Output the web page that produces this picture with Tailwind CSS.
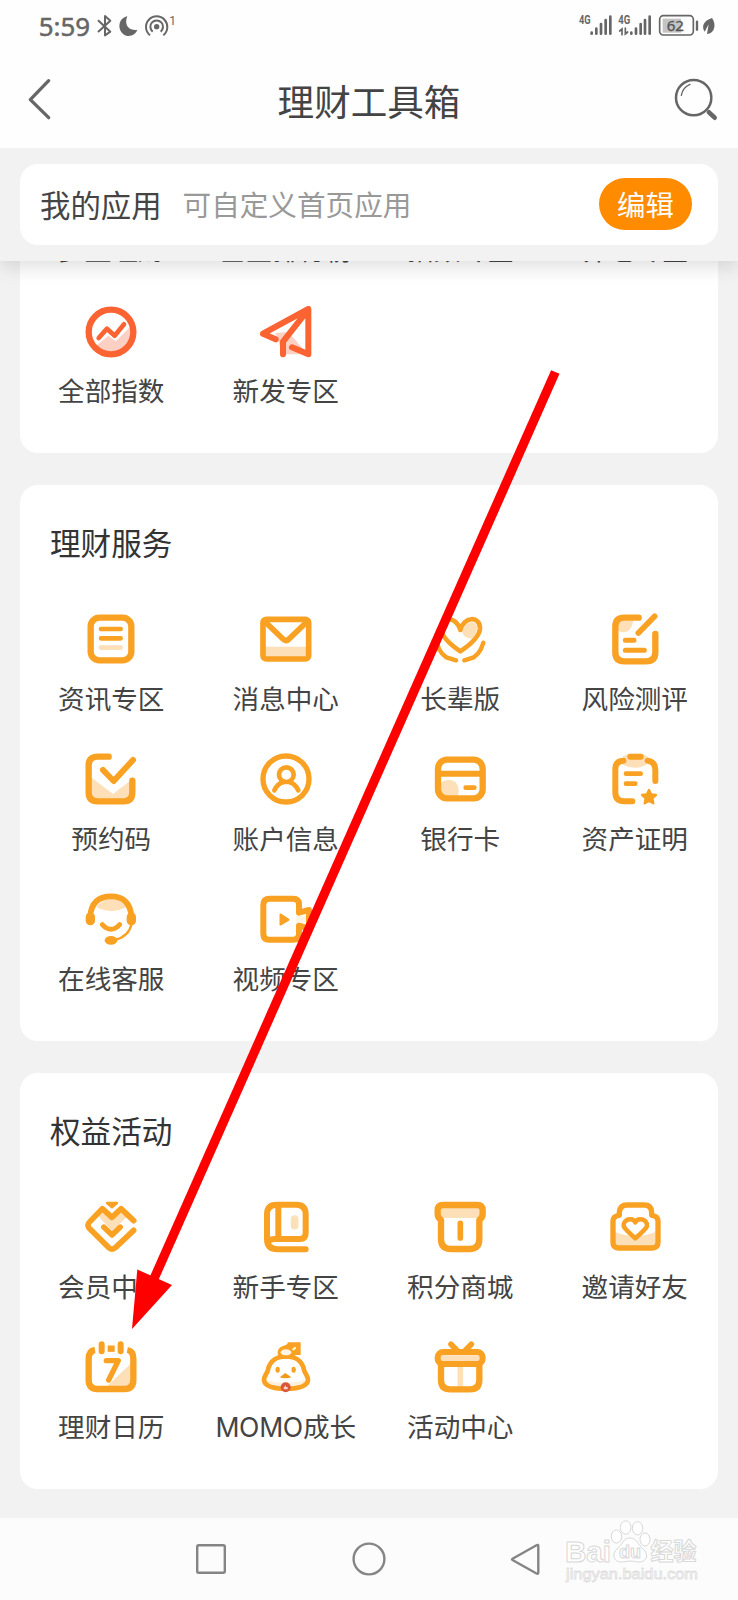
<!DOCTYPE html>
<html lang="zh-CN">
<head>
<meta charset="utf-8">
<title>理财工具箱</title>
<script src="https://cdn.jsdelivr.net/npm/@tailwindcss/browser@4"></script>
</head>
<body class="relative w-[738px] h-[1600px] overflow-hidden bg-[#f2f2f2] font-['Inter','Noto_Sans_CJK_SC',sans-serif] text-[#444]">
<div class="flex h-[1600px] flex-col">

<div class="relative z-10 h-[261px] shrink-0 bg-[#f2f2f2] shadow-[0_4px_20px_rgba(0,0,0,0.15)]">
  <div class="h-[148px] bg-[#fefefe]">
    <div class="flex h-[52px] items-center justify-between">
      <svg class="h-[52px] w-[190px]" viewBox="0 0 570 156" fill="none" stroke="#666" stroke-width="6">
        <text x="116" y="109" font-family="Noto Sans" font-size="77" fill="#666" stroke="#666" stroke-width="1.5" textLength="154" lengthAdjust="spacingAndGlyphs">5:59</text>
        <path d="M294 61L331 95L315 106V48L331 62L294 96" stroke-linejoin="round"/>
        <path d="M382 49C352 54 350 98 379 107C394 110 408 102 412 89C384 94 372 72 382 49Z" fill="#666" stroke="none"/>
        <circle cx="470" cy="80" r="8" fill="#666" stroke="none"/>
        <path d="M458 95A19 19 0 1 1 482 95M450 106A32 32 0 1 1 490 106" stroke-width="6"/>
        <text x="508" y="74" font-family="Roboto" font-size="36" fill="#666" stroke="none">1</text>
      </svg>
      <svg class="mr-[12px] h-[52px] w-[150px]" viewBox="624 0 450 156" fill="#666">
        <text x="633" y="73" font-family="Roboto" font-weight="700" font-size="36" textLength="35" lengthAdjust="spacingAndGlyphs">4G</text>
        <text x="751" y="73" font-family="Roboto" font-weight="700" font-size="36" textLength="36" lengthAdjust="spacingAndGlyphs">4G</text>
        <g stroke="#666" stroke-width="8" stroke-linecap="round">
          <path d="M671 98V101M685 86V101M699 72V101M713 60V101M727 50V101M790 98V101M804 86V101M818 72V101M831 60V101M845 50V101"/>
          <path d="M762 104V87L755 93M772 84V102L779 96" fill="none" stroke-width="5"/>
        </g>
        <rect x="884" y="56" width="55" height="42" fill="#c4c4c4"/>
        <rect x="875" y="47" width="101" height="58" rx="11" fill="none" stroke="#666" stroke-width="5"/>
        <path d="M987 65V89" stroke="#666" stroke-width="7" stroke-linecap="round"/>
        <text x="896" y="94" font-family="Noto Sans" font-size="45" textLength="52" lengthAdjust="spacingAndGlyphs" fill="#555" stroke="#555">62</text>
        <path d="M1032 54C1006 62 1000 80 1010 95L1022 73L1017 102C1040 101 1046 73 1032 54Z"/>
      </svg>
    </div>
    <div class="flex h-24 items-center justify-between">
      <svg class="h-24 w-20" viewBox="0 156 240 288" fill="none" stroke="#666" stroke-width="10" stroke-linecap="round" stroke-linejoin="round"><path d="M146 242L91 299L146 353"/></svg>
      <h1 class="pt-[5px] text-[36.6px] leading-[40px]">理财工具箱</h1>
      <svg class="h-24 w-20" viewBox="870 156 240 288" fill="none" stroke="#666" stroke-linecap="round"><circle cx="977" cy="293" r="53" stroke-width="7.5"/><path d="M940 286Q944 262 966 253" stroke-width="4"/><path d="M1023 337L1040 353" stroke-width="14"/></svg>
    </div>
  </div>
  <div class="mx-5 mt-4 flex h-[81px] items-center rounded-[18px] bg-white px-5">
    <span class="pt-[2px] text-[30.4px] leading-[40px]">我的应用</span>
    <span class="ml-[21px] pt-[3px] text-[28.6px] leading-[40px] text-[#999]">可自定义首页应用</span>
    <button class="mr-[6px] mb-[2px] ml-auto h-[52px] w-[93px] rounded-full bg-[#ff8c00] pt-[5px] text-[28.4px] leading-[40px] text-white">编辑</button>
  </div>
</div>

<section class="mx-5 -mt-[31px] h-[223px] shrink-0 rounded-b-[18px] bg-white">
  <div class="ml-1 grid w-[698px] grid-cols-4 gap-y-[36px] text-center text-[26.6px] leading-[40px] whitespace-nowrap">
    <div>多盈理财</div><div>基金排行榜</div><div>指数专区</div><div>养老专区</div>
    <div class="flex flex-col items-center gap-[13px]">
      <svg class="size-[52px]" viewBox="256 467 156 156" fill="none" stroke="#fb6432" stroke-linecap="round" stroke-linejoin="round"><path d="M278 596L326 556L348 573L400 522V570L370 610H300Z" fill="#fdd0c3" stroke="none"/><circle cx="334" cy="545" r="67" stroke-width="19"/><path d="M297 563L322 535L345 556L373 522" stroke-width="14"/></svg>
      <span>全部指数</span></div>
    <div class="flex flex-col items-center gap-[13px]">
      <svg class="size-[52px]" viewBox="779 467 156 156" fill="none" stroke="#fb6432" stroke-linecap="round" stroke-linejoin="round"><path d="M825 548L865 545L922 612H848Z" fill="#fdd0c3" stroke="none"/><path d="M866 548L908 510L912 598Z" fill="#fff" stroke="none"/><path d="M826 567L788 550L924 476V612L875 591M848 612V574L922 480" stroke-width="18"/></svg>
      <span>新发专区</span></div>
  </div>
</section>

<section class="mx-5 mt-8 h-[556px] shrink-0 rounded-[18px] bg-white pt-[39px]">
  <h2 class="ml-[30px] text-[30.6px] leading-[40px] text-[#333]">理财服务</h2>
  <div class="mt-[49px] ml-1 grid w-[698px] grid-cols-4 gap-y-[34px] text-center text-[26.6px] leading-[40px] whitespace-nowrap">
    <div class="flex flex-col items-center gap-[14px]">
      <svg class="size-[52px]" viewBox="256 400 156 156" fill="none" stroke="#f9a122" stroke-linecap="round"><rect x="273" y="414" width="122" height="128" rx="26" stroke-width="19"/><path d="M304 448H363M304 476H363" stroke-width="14"/><path d="M304 504H363" stroke="#fddfb8" stroke-width="14"/></svg>
      <span>资讯专区</span></div>
    <div class="flex flex-col items-center gap-[14px]">
      <svg class="size-[52px]" viewBox="779 400 156 156" fill="none" stroke="#f9a122" stroke-linejoin="round"><path d="M794 501H920V532H794Z" fill="#fddfb8" stroke="none"/><rect x="788" y="419" width="137" height="119" rx="10" stroke-width="17"/><path d="M795 427L848 478Q857 487 866 478L919 427" stroke-width="17"/></svg>
      <span>消息中心</span></div>
    <div class="flex flex-col items-center gap-[14px]">
      <svg class="size-[52px]" viewBox="199 40 156 156" fill="none" stroke="#f9a122" stroke-linecap="round" stroke-linejoin="round"><path d="M283 97C292 72 308 64 322 70C333 82 328 102 314 116Q290 118 283 97Z" fill="#fddfb8" stroke="none"/><path d="M278 91C268 50 219 47 220 87C222 113 254 139 278 155C302 139 335 113 337 87C338 47 287 50 278 91Z" stroke-width="14"/><path d="M207 129L214 148Q222 164 236 173L265 182M347 129L340 148Q332 164 318 173L290 182" stroke-width="13"/></svg>
      <span>长辈版</span></div>
    <div class="flex flex-col items-center gap-[14px]">
      <svg class="size-[52px]" viewBox="722 40 156 156" fill="none" stroke="#f9a122" stroke-linecap="round"><path d="M749 63H795Q788 98 764 98Q754 98 749 91Z" fill="#fddfb8" stroke="none"/><path d="M811 54H768Q741 54 741 81V158Q741 185 768 185H833Q861 185 861 158V103" stroke-width="19"/><path d="M810 100L859 50" stroke-width="17"/><path d="M771 122H797M771 152H828" stroke-width="15"/></svg>
      <span>风险测评</span></div>

    <div class="flex flex-col items-center gap-[14px]">
      <svg class="size-[52px]" viewBox="256 70 156 156" fill="none" stroke="#f9a122" stroke-linecap="round" stroke-linejoin="round"><path d="M274 143L340 193L392 153V208H274Z" fill="#fddfb8" stroke="none"/><path d="M327 81H295Q267 81 267 108V188Q267 215 294 215H372Q398 215 398 188V153" stroke-width="19"/><path d="M310 121L342 154L400 91" stroke-width="18"/></svg>
      <span>预约码</span></div>
    <div class="flex flex-col items-center gap-[14px]">
      <svg class="size-[52px]" viewBox="779 70 156 156" fill="none" stroke="#f9a122" stroke-linecap="round"><circle cx="857" cy="148" r="69" stroke-width="16"/><circle cx="858" cy="135" r="22" stroke-width="14"/><path d="M822 182Q833 160 848 158M868 158Q883 160 894 182" stroke-width="14"/></svg>
      <span>账户信息</span></div>
    <div class="flex flex-col items-center gap-[14px]">
      <svg class="size-[52px]" viewBox="199 460 156 156" fill="none" stroke="#f9a122" stroke-linecap="round"><path d="M219 549Q244 532 264 548Q278 565 271 588H219Z" fill="#fddfb8" stroke="none"/><rect x="211" y="480" width="134" height="116" rx="27" stroke-width="19"/><path d="M212 522H344" stroke-width="18"/><path d="M294 564H320" stroke-width="14"/></svg>
      <span>银行卡</span></div>
    <div class="flex flex-col items-center gap-[14px]">
      <svg class="size-[52px]" viewBox="722 460 156 156" fill="none" stroke="#f9a122" stroke-linecap="round" stroke-linejoin="round"><path d="M764 470L780 462H822L840 472L838 493Q822 504 800 504Q780 504 763 495Z" fill="#fddfb8" stroke="none"/><path d="M765 483Q741 484 741 508V578Q741 605 768 605H792M838 483Q861 487 861 510V544" stroke-width="18"/><path d="M786 471H817" stroke-width="18"/><path d="M773 522H817M773 552H801" stroke-width="14"/><path d="M842 571L848 584L863 586L852 596L855 611L842 604L829 611L832 596L821 586L836 584Z" fill="#f9a122" stroke-width="7"/></svg>
      <span>资产证明</span></div>

    <div class="flex flex-col items-center gap-[14px]">
      <svg class="size-[52px]" viewBox="256 490 156 156" fill="none" stroke="#f9a122" stroke-linecap="round"><path d="M290 532Q310 508 334 508Q360 508 380 532Q336 556 290 532Z" fill="#fddfb8" stroke="none"/><path d="M271 562Q276 500 334 500Q390 500 396 562" stroke-width="17"/><path d="M272 562V573" stroke-width="28"/><path d="M395 562V573" stroke-width="28"/><path d="M308 585Q334 613 360 585" stroke-width="15"/><path d="M396 582Q388 620 345 631" stroke-width="7"/><ellipse cx="334" cy="632" rx="19" ry="13" fill="#f9a122" stroke="none"/></svg>
      <span>在线客服</span></div>
    <div class="flex flex-col items-center gap-[14px]">
      <svg class="size-[52px]" viewBox="779 490 156 156" fill="none" stroke="#f9a122" stroke-linejoin="round"><path d="M808 507H878Q896 507 896 524V549L926 541V597L896 588V612Q896 630 878 630H807Q789 630 789 612V526Q789 507 808 507Z" stroke-width="18"/><path d="M888 569H917" stroke="#fff3e2" stroke-width="20"/><path d="M841 555L864 570L841 584Z" fill="#f9a122" stroke-width="7"/></svg>
      <span>视频专区</span></div>
  </div>
</section>

<section class="mx-5 mt-8 h-[416px] shrink-0 rounded-[18px] bg-white pt-[39px]">
  <h2 class="ml-[30px] text-[30.6px] leading-[40px] text-[#333]">权益活动</h2>
  <div class="mt-[49px] ml-1 grid w-[698px] grid-cols-4 gap-y-[34px] text-center text-[26.6px] leading-[40px] whitespace-nowrap">
    <div class="flex flex-col items-center gap-[14px]">
      <svg class="size-[52px]" viewBox="256 424 156 156" fill="none" stroke="#f9a122" stroke-linecap="round" stroke-linejoin="round"><path d="M290 463L306 450L336 474L365 450L386 467L338 515Z" fill="#fddfb8" stroke="none"/><path d="M402 483L364 447L337 473L308 447L268 489Q262 497 268 505L326 563Q337 574 348 563L402 512" stroke-width="17"/><path d="M312 502L337 526L362 502" stroke-width="16"/><path d="M322 430H352L337 443Z" fill="#f9a122" stroke-width="7"/></svg>
      <span>会员中心</span></div>
    <div class="flex flex-col items-center gap-[14px]">
      <svg class="size-[52px]" viewBox="779 424 156 156" fill="none" stroke="#f9a122" stroke-linecap="round"><path d="M883 478V498" stroke="#fddfb8" stroke-width="23"/><path d="M916 569H832Q800 569 800 538V464Q800 435 829 435H888Q916 435 916 464V520Q916 538 898 538H822Q805 538 802 552M834 436V536" stroke-width="18"/></svg>
      <span>新手专区</span></div>
    <div class="flex flex-col items-center gap-[14px]">
      <svg class="size-[52px]" viewBox="199 64 156 156" fill="none" stroke="#f9a122" stroke-linecap="round" stroke-linejoin="round"><path d="M218 82H337V115H218Z" fill="#fddfb8" stroke="none"/><path d="M220 178V121Q210 114 210 104V92Q210 76 226 76H329Q345 76 345 92V104Q345 114 335 121V178Q335 208 305 208H250Q220 208 220 178Z" stroke-width="19"/><path d="M278 131V175" stroke-width="17"/></svg>
      <span>积分商城</span></div>
    <div class="flex flex-col items-center gap-[14px]">
      <svg class="size-[52px]" viewBox="722 64 156 156" fill="none" stroke="#f9a122" stroke-linecap="round" stroke-linejoin="round"><path d="M740 157Q801 181 862 157V200H740Z" fill="#fddfb8" stroke="none"/><path d="M753 107V98Q755 76 776 76H828Q849 76 850 98V107Q869 109 869 125V188Q869 205 852 205H750Q734 205 734 188V125Q734 109 753 107Z" stroke-width="16"/><path d="M801 128C793 111 764 119 766 139Q768 147 801 176Q834 147 836 139C838 119 809 111 801 128Z" fill="#fff" stroke-width="14"/></svg>
      <span>邀请好友</span></div>

    <div class="flex flex-col items-center gap-[14px]">
      <svg class="size-[52px]" viewBox="256 64 156 156" fill="none" stroke="#f9a122" stroke-linecap="round" stroke-linejoin="round"><path d="M392 133V200H322Z" fill="#fddfb8" stroke="none"/><path d="M286 91Q267 94 267 117V181Q267 208 294 208H374Q401 208 401 181V117Q401 94 383 91" stroke-width="19" stroke-linecap="butt"/><path d="M306 74V95M363 74V95" stroke-width="18"/><path d="M324 87H345" stroke-width="19" stroke-linecap="butt"/><path d="M320 123H356L327 181" stroke-width="16"/></svg>
      <span>理财日历</span></div>
    <div class="flex flex-col items-center gap-[14px]">
      <svg class="size-[52px]" viewBox="779 64 156 156" fill="none" stroke="#f9a122" stroke-linecap="round" stroke-linejoin="round"><path d="M797 180Q857 200 917 180Q908 210 857 208Q806 210 797 180Z" fill="#fff0dc" stroke="none"/><path d="M857 110C882 110 905 122 911 150C914 163 923 168 923 181C921 204 884 207 857 207C830 207 793 204 791 181C791 168 800 163 803 150C809 122 832 110 857 110Z" stroke-width="14"/><path d="M833 108Q826 85 850 78Q864 75 862 68H901V106H886Q877 116 857 117Q839 116 833 108Z" fill="#f9a122" stroke="none"/><ellipse cx="857" cy="98" rx="16" ry="9" fill="#fff4e5" stroke="none"/><path d="M879 89L884 85" stroke="#fff3c0" stroke-width="7"/><ellipse cx="832" cy="150" rx="6.500" ry="9" fill="#f9a122" stroke="none"/><ellipse cx="880" cy="150" rx="6.500" ry="9" fill="#f9a122" stroke="none"/><path d="M838 173L855 160L873 173Q856 179 838 173Z" fill="#f09a1c" stroke="none"/><circle cx="856" cy="203" r="15" fill="#d9583b" stroke="none"/><path d="M850 209V204L856 197L857 202H862V209Z" fill="#fbd3c8" stroke="none"/></svg>
      <span><span class="tracking-[-0.3px]">MOMO</span>成长</span></div>
    <div class="flex flex-col items-center gap-[14px]">
      <svg class="size-[52px]" viewBox="199 484 156 156" fill="none" stroke="#f9a122" stroke-linecap="round" stroke-linejoin="round"><path d="M220 536H335" stroke="#fddfb8" stroke-width="18"/><path d="M278 558V622" stroke="#fddfb8" stroke-width="17"/><rect x="210" y="517" width="135" height="36" rx="16" stroke-width="18"/><path d="M220 556V601Q220 629 248 629H307Q335 629 335 601V556" stroke-width="19"/><path d="M250 494L269 513M311 494L292 513" stroke-width="17"/></svg>
      <span>活动中心</span></div>
  </div>
</section>

<nav class="relative mt-[29px] flex h-[82px] shrink-0 justify-center bg-[#fcfcfc]">
  <svg class="h-[82px] w-[738px]" viewBox="0 0 738 82" fill="none" stroke="#858585" stroke-width="2.4" stroke-linejoin="round">
    <rect x="197.2" y="27.2" width="27.6" height="27.6" rx="1.5"/>
    <circle cx="369" cy="41" r="15.4"/>
    <path d="M512.5 40.8Q511.5 41.2 512.5 42L536.5 55.5Q538.3 56.3 538.3 54.5V28Q538.3 26.3 536.5 27.2Z"/>
    <g stroke="#d8d8d8" stroke-width="1" fill="#fff">
      <text x="565" y="43.500" font-family="Liberation Sans" font-weight="700" font-size="30" textLength="46" lengthAdjust="spacingAndGlyphs">Bai</text>
      <ellipse cx="616.500" cy="18.500" rx="5.200" ry="6.500"/><ellipse cx="625.700" cy="9.500" rx="5.300" ry="6.700"/><ellipse cx="637.500" cy="10.300" rx="5.200" ry="6.600"/><ellipse cx="645" cy="21.500" rx="5" ry="6.500"/>
      <path d="M630 20C622 20 623 27 617 31C611 36 614 44 621 44C625 44 627 43 630 43C634 43 636 44 640 44C647 43 649 36 643 31C638 27 637 20 630 20Z"/>
      <text x="619" y="40" font-family="Liberation Sans" font-weight="700" font-size="18" textLength="22" lengthAdjust="spacingAndGlyphs">du</text>
      <text x="650.500" y="42" font-family="Noto Sans CJK SC" font-weight="700" font-size="23.500" textLength="46" lengthAdjust="spacingAndGlyphs">经验</text>
      <text x="566" y="60.500" font-family="Liberation Sans" font-size="15" stroke="#dedede" stroke-width=".8" textLength="132" lengthAdjust="spacingAndGlyphs">jingyan.baidu.com</text>
    </g>
  </svg>
</nav>
</div>

<svg class="pointer-events-none absolute inset-0 z-20 h-[1600px] w-[738px]" viewBox="0 0 738 1600"><path d="M555.300 372L153 1281" stroke="#fe0000" stroke-width="9.200"/><path d="M132 1329L137.300 1269.500L172 1285Z" fill="#fe0000"/></svg>
</body>
</html>
